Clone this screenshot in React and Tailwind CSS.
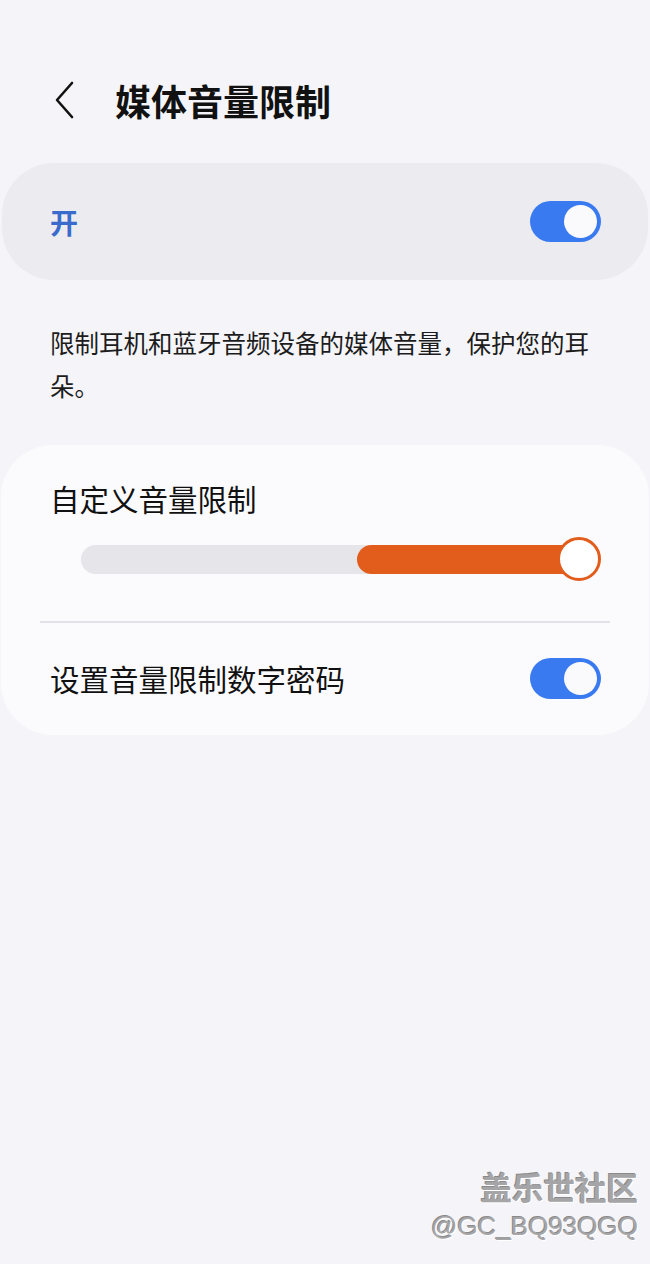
import React from 'react';

const FONT = '"Noto Sans CJK SC", "Noto Sans", sans-serif';

function Toggle() {
  return (
    <div className="w-[71px] h-[41px] rounded-full bg-[#3a7af0] flex items-center justify-end pr-[4px]">
      <div className="w-[33px] h-[33px] rounded-full bg-[#fafafc]" />
    </div>
  );
}

export default function App() {
  return (
    <div className="relative min-h-[1264px] bg-[#f5f5f9] overflow-hidden" style={{ fontFamily: FONT }}>
      {/* Header */}
      <div className="pt-[72px] h-[128px] flex items-center pl-[54px]">
        <svg width="20" height="38" viewBox="0 0 20 38" fill="none">
          <path d="M18 2 L3 19 L18 36" stroke="#111" strokeWidth="2.6" strokeLinecap="round" strokeLinejoin="round" />
        </svg>
        <h1 className="ml-[41px] text-[36px] font-bold text-[#111] leading-none">媒体音量限制</h1>
      </div>

      {/* Master switch */}
      <div className="mt-[35px] mx-[2px] h-[117px] rounded-[52px] bg-[#ececf0] flex items-center justify-between pl-[48px] pr-[47px]">
        <span className="text-[28px] font-bold text-[#3a6bcc] leading-none">开</span>
        <Toggle />
      </div>

      {/* Description */}
      <p className="mt-[41px] px-[50px] text-[24.5px] leading-[43px] text-[#1c1c1c]">
        限制耳机和蓝牙音频设备的媒体音量，保护您的耳朵。
      </p>

      {/* Settings card */}
      <div className="mt-[38px] mx-[1px] rounded-[52px] bg-[#fbfbfd] pt-[33px]">
        <div className="px-[49px] text-[29.5px] leading-[40px] text-[#111]">自定义音量限制</div>
        <div className="mt-[19px] h-[44px] pl-[80px] pr-[49px] flex items-center">
          <div className="relative flex-1 h-[29px] rounded-full bg-[#e6e6ea]">
            <div className="absolute right-0 top-0 h-full w-[243px] rounded-full bg-[#e25c1c]" />
            <div className="absolute right-[-1px] top-1/2 -translate-y-1/2 w-[44px] h-[44px] rounded-full bg-white border-[3px] border-[#e25c1c]" />
          </div>
        </div>
        <div className="mt-[40px] mx-[39px] h-[1.5px] bg-[#e1e1e7]" />
        <div className="h-[112px] flex items-center justify-between pl-[49px] pr-[48px]">
          <span className="text-[29.5px] text-[#111] leading-none">设置音量限制数字密码</span>
          <Toggle />
        </div>
      </div>

      {/* Watermark */}
      <div className="absolute right-[12px] bottom-[18px] flex flex-col items-end text-[#a5a5a8]" style={{ textShadow: '1px 1px 0 #fff, -1px -1px 0 #8a8a8a' }}>
        <span className="text-[31.5px] font-bold leading-[40px]">盖乐世社区</span>
        <span className="text-[26px] leading-[40px]" style={{ fontFamily: '"Liberation Sans", sans-serif' }}>@GC_BQ93QGQ</span>
      </div>
    </div>
  );
}
